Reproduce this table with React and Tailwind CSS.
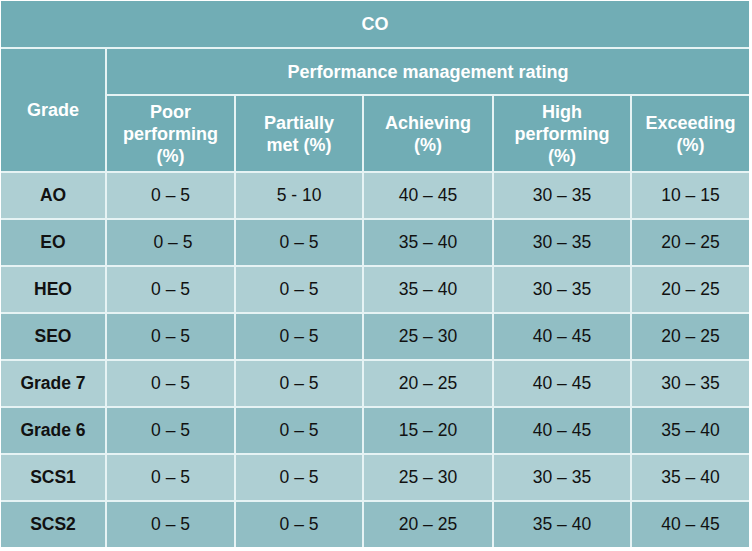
import React from "react";

const rows = [
  ["AO", "0 – 5", "5 - 10", "40 – 45", "30 – 35", "10 – 15"],
  ["EO", "\u00a00 – 5", "0 – 5", "35 – 40", "30 – 35", "20 – 25"],
  ["HEO", "0 – 5", "0 – 5", "35 – 40", "30 – 35", "20 – 25"],
  ["SEO", "0 – 5", "0 – 5", "25 – 30", "40 – 45", "20 – 25"],
  ["Grade 7", "0 – 5", "0 – 5", "20 – 25", "40 – 45", "30 – 35"],
  ["Grade 6", "0 – 5", "0 – 5", "15 – 20", "40 – 45", "35 – 40"],
  ["SCS1", "0 – 5", "0 – 5", "25 – 30", "30 – 35", "35 – 40"],
  ["SCS2", "0 – 5", "0 – 5", "20 – 25", "35 – 40", "40 – 45"],
];

const head = "bg-[#71adb5] text-white font-bold text-[18px] leading-[22px] flex items-center justify-center text-center";

export default function App() {
  return (
    <div className="w-[752px] h-[551px] bg-white p-[1px]" style={{ fontFamily: '"Liberation Sans", Arial, sans-serif' }}>
      <div className="grid w-[748px] bg-[#e6f3f4] gap-[2px] grid-cols-[104px_127px_126px_128px_136px_117px] grid-rows-[46px_45px_75px_repeat(8,45px)]">
        <div className={`${head} col-span-6`}>CO</div>
        <div className={`${head} row-span-2`}>Grade</div>
        <div className={`${head} col-span-5`}>Performance management rating</div>
        <div className={head}>Poor<br />performing<br />(%)</div>
        <div className={head}>Partially<br />met (%)</div>
        <div className={head}>Achieving<br />(%)</div>
        <div className={head}>High<br />performing<br />(%)</div>
        <div className={head}>Exceeding<br />(%)</div>
        {rows.map((r, i) =>
          r.map((c, j) => (
            <div
              key={`${i}-${j}`}
              className={`${i % 2 === 0 ? "bg-[#aecfd3]" : "bg-[#91bec4]"} ${j === 0 ? "font-bold" : ""} text-[17.5px] text-[#111] flex items-center justify-center whitespace-pre`}
            >
              {c}
            </div>
          ))
        )}
      </div>
    </div>
  );
}
